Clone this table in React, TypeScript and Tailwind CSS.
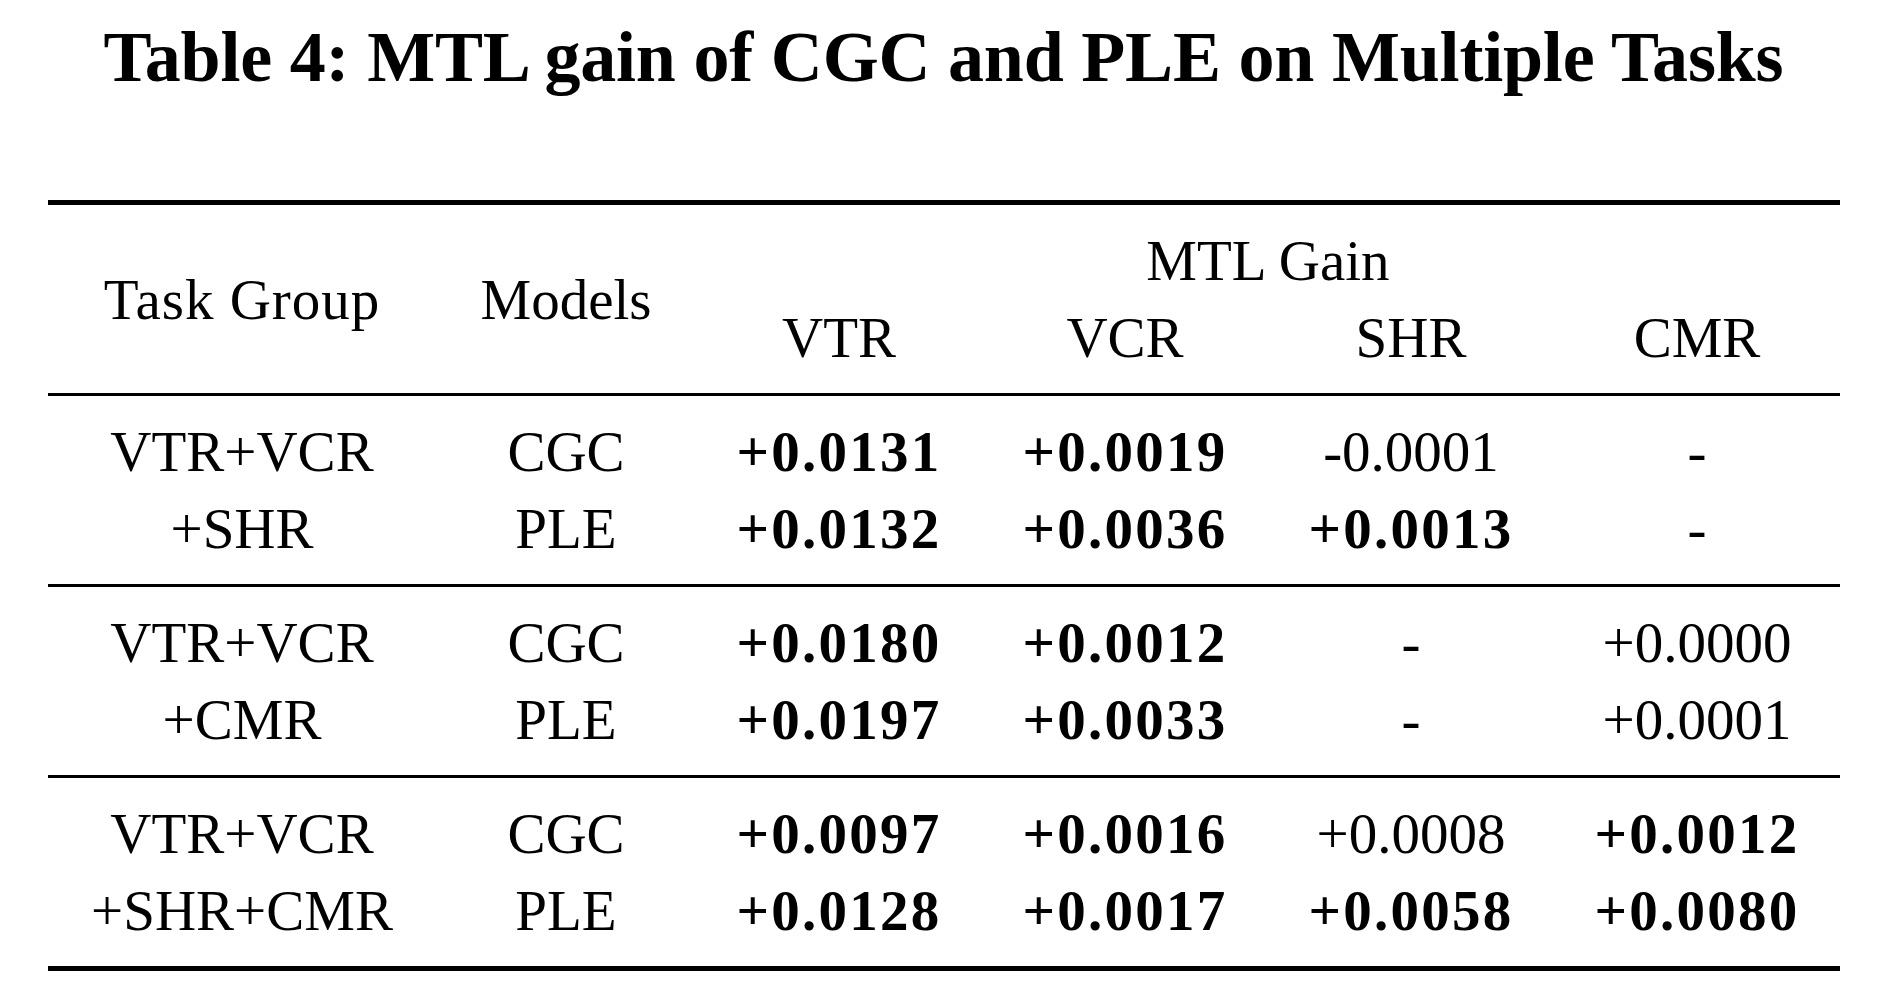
import React from "react";

const COLS = "grid grid-cols-[388px_260px_286px_286px_286px_286px]";

type Cell = { text: string; bold?: boolean };

const GROUPS: { task: [string, string]; rows: { model: string; cells: Cell[] }[] }[] = [
  {
    task: ["VTR+VCR", "+SHR"],
    rows: [
      {
        model: "CGC",
        cells: [
          { text: "+0.0131", bold: true },
          { text: "+0.0019", bold: true },
          { text: "-0.0001" },
          { text: "-" },
        ],
      },
      {
        model: "PLE",
        cells: [
          { text: "+0.0132", bold: true },
          { text: "+0.0036", bold: true },
          { text: "+0.0013", bold: true },
          { text: "-" },
        ],
      },
    ],
  },
  {
    task: ["VTR+VCR", "+CMR"],
    rows: [
      {
        model: "CGC",
        cells: [
          { text: "+0.0180", bold: true },
          { text: "+0.0012", bold: true },
          { text: "-" },
          { text: "+0.0000" },
        ],
      },
      {
        model: "PLE",
        cells: [
          { text: "+0.0197", bold: true },
          { text: "+0.0033", bold: true },
          { text: "-" },
          { text: "+0.0001" },
        ],
      },
    ],
  },
  {
    task: ["VTR+VCR", "+SHR+CMR"],
    rows: [
      {
        model: "CGC",
        cells: [
          { text: "+0.0097", bold: true },
          { text: "+0.0016", bold: true },
          { text: "+0.0008" },
          { text: "+0.0012", bold: true },
        ],
      },
      {
        model: "PLE",
        cells: [
          { text: "+0.0128", bold: true },
          { text: "+0.0017", bold: true },
          { text: "+0.0058", bold: true },
          { text: "+0.0080", bold: true },
        ],
      },
    ],
  },
];

export default function App() {
  return (
    <div className="w-[1887px] h-[1002px] bg-white text-black font-['Liberation_Serif',serif] overflow-hidden">
      {/* caption */}
      <h1 className="pt-[21px] h-[93px] text-center text-[72px] leading-[72px] font-bold tracking-[-0.2px]">
        Table 4: MTL gain of CGC and PLE on Multiple Tasks
      </h1>

      <div className="ml-[48px] mt-[107px] w-[1792px] text-[57px] leading-[77px] text-center">
        <div className="border-t-[5px] border-black" />

        {/* header */}
        <div className={`${COLS} py-[17px]`}>
          <div className="row-span-2 self-center tracking-[1px]">Task Group</div>
          <div className="row-span-2 self-center">Models</div>
          <div className="col-span-4">MTL Gain</div>
          <div>VTR</div>
          <div>VCR</div>
          <div>SHR</div>
          <div>CMR</div>
        </div>

        {GROUPS.map((g, gi) => (
          <div key={gi}>
            <div className="border-t-[3px] border-black" />
            <div className={`${COLS} py-[17px]`}>
              {g.rows.map((r, ri) => (
                <React.Fragment key={ri}>
                  <div>{g.task[ri]}</div>
                  <div>{r.model}</div>
                  {r.cells.map((c, ci) => (
                    <div key={ci} className={c.bold ? "font-bold tracking-[0.04em]" : ""}>
                      {c.text}
                    </div>
                  ))}
                </React.Fragment>
              ))}
            </div>
          </div>
        ))}

        <div className="border-t-[5px] border-black" />
      </div>
    </div>
  );
}
